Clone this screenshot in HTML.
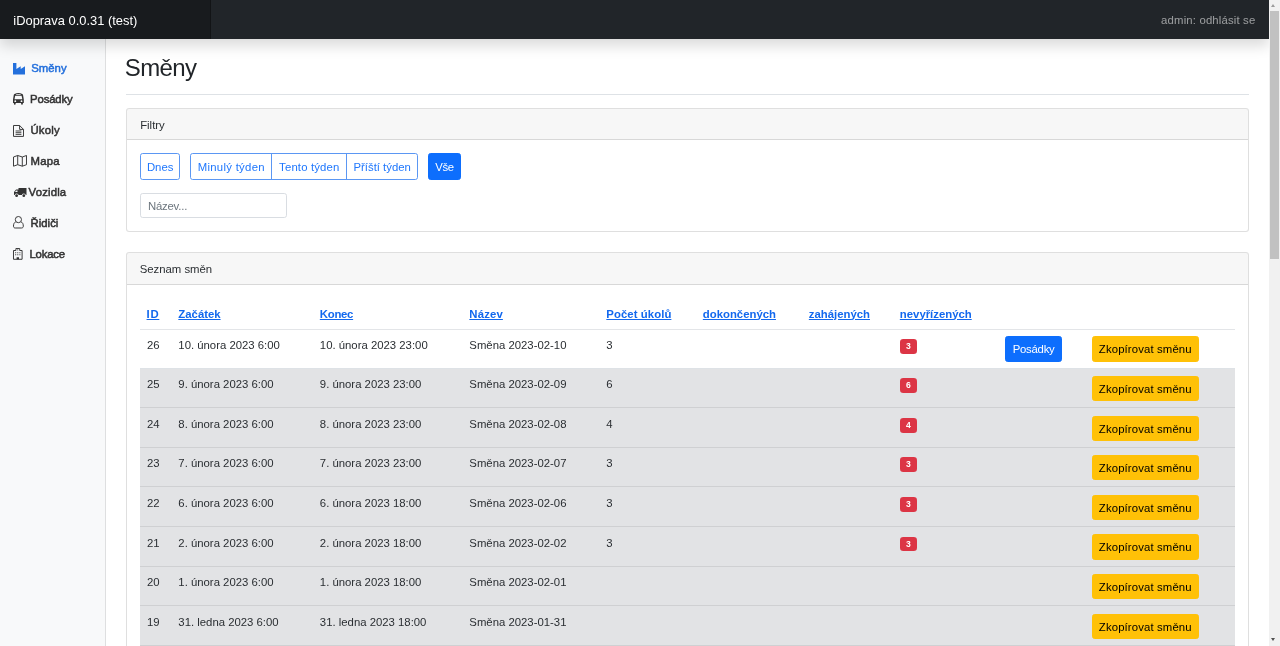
<!DOCTYPE html>
<html lang="cs">
<head>
<meta charset="utf-8">
<title>iDoprava</title>
<style>
*{box-sizing:border-box}
html,body{margin:0;padding:0}
body{width:1280px;height:646px;overflow:hidden;position:relative;background:#fff;color:#2a2e32;
  font-family:"Liberation Sans",sans-serif;font-size:11.35px;line-height:17.5px}
a{color:#0d6efd}
#page{position:absolute;left:0;top:0;width:1268.5px;height:646px;overflow:hidden;will-change:transform}
/* header */
header{position:absolute;left:0;top:0;width:1268.5px;height:38.8px;background:#212529;z-index:10;
  box-shadow:0 6.67px 13.33px rgba(0,0,0,.15)}
.brand{position:absolute;left:0;top:0;width:211.3px;height:38.8px;background:rgba(0,0,0,.25);
  box-shadow:inset -1px 0 0 rgba(0,0,0,.25);color:#fff;font-size:12.9px;line-height:20px;padding:10.6px 13.3px 0 13.3px;
  text-decoration:none;white-space:nowrap}
.logout{position:absolute;right:13.1px;top:0.6px;height:38.8px;line-height:38.8px;color:rgba(255,255,255,.55);
  text-decoration:none;white-space:nowrap;letter-spacing:.16px}
/* sidebar */
#sidebar{position:absolute;left:0;top:0;width:105.8px;height:646px;background:#f8f9fa;
  box-shadow:inset -1px 0 0 rgba(0,0,0,.1);z-index:5}
#sidebar ul{list-style:none;margin:0;padding:0}
#sidebar li{position:absolute;left:0;width:105px;height:30.87px}
#sidebar a{display:block;color:#333;font-weight:normal;-webkit-text-stroke:.5px currentColor;text-decoration:none;white-space:nowrap}
#sidebar a.active{color:#2470dc}
#sidebar svg{position:absolute;fill:currentColor;overflow:visible}
#sidebar span{position:absolute;top:0;line-height:17.5px}
/* main */
main{position:absolute;left:105.8px;top:38.8px;width:1162.7px;padding:0 19.5px 0 20.2px}
.titlebar{height:56.1px;border-bottom:1px solid #dee2e6;margin-bottom:13.3px;position:relative}
h1{position:absolute;left:-1.2px;top:13.3px;margin:0;letter-spacing:-0.65px;font-size:24px;line-height:32px;font-weight:normal;color:#212529}
.card{border:1px solid rgba(0,0,0,.125);border-radius:3.33px;background:#fff}
.card-header{height:30.9px;padding:7.8px 13.2px 0 13.2px;background:rgba(0,0,0,.03);border-bottom:1px solid rgba(0,0,0,.125);
  border-radius:2.5px 2.5px 0 0}
.card-body{padding:13.3px}
.btn{display:inline-block;vertical-align:middle;font-size:11.35px;line-height:17.5px;padding:3.3px 6.67px;border:1px solid transparent;
  border-radius:2.67px;text-decoration:none;white-space:nowrap;text-align:center}
.btn-outline-primary{color:#1f77fd;border-color:#5b97f3}
.btn-primary{color:#fff;background:#0d6efd;border-color:#0d6efd}
.btn-warning{color:#000;background:#ffc107;border-color:#ffc107}
.filters{height:26.6px;margin-bottom:13.4px;position:relative}
.filters .btn{position:absolute;top:0;height:26.6px;padding:4.7px 0 0 0}
.form-control{display:block;width:146.6px;height:25px;border:1px solid #d9dde2;border-radius:2.67px;letter-spacing:-.2px;
  padding:3.3px 6.67px;font-family:inherit;font-size:11.35px;line-height:17.5px;color:#212529;background:#fff;outline:0}
.form-control::placeholder{color:#6c757d;opacity:1}
#c1{height:124px;margin-bottom:20px}
#c2{height:500px}
#c2 .card-header{height:31.8px;padding-top:8.1px;padding-left:12.7px}
table{border-collapse:separate;border-spacing:0;table-layout:fixed;width:1094.6px;margin:0}
th,td{padding:7.57px 6.67px 0 6.67px;text-align:left;vertical-align:top;border-bottom:1px solid #dee2e6;white-space:nowrap;overflow:hidden}
th{font-weight:bold;vertical-align:bottom;height:31.7px;padding:0 6.67px 5.98px 6.67px;border-bottom-color:#e3e5e8}
th a{color:#1268ee;text-decoration:underline}
tbody td{height:39.6px}
tbody tr.first td{height:38.65px;padding-top:6.97px}
tr.sec td{background:#e2e3e5;border-bottom-color:#cfd0d2}
td .btn{display:block;float:left;height:25.2px;padding:3.92px 6.67px 0 6.67px;margin-top:-0.07px}
tr.first td .btn{margin-top:-0.65px;height:25.5px}
td .btn-warning{width:106.9px;padding-left:0;padding-right:0;letter-spacing:.13px}
.badge{display:inline-block;background:#dc3545;color:#fff;font-weight:bold;font-size:8.6px;line-height:8.75px;
  padding:3.06px 6.15px;border-radius:3.33px;vertical-align:baseline}
/* scrollbar */
#sb{position:absolute;left:1268.7px;top:0;width:11.3px;height:646px;background:#f1f1f1}
#sb .thumb{position:absolute;left:1.4px;width:8.8px;top:10.9px;height:247.9px;background:#c1c1c1}
#sb .up,#sb .dn{position:absolute;left:2.8px;width:0;height:0;border-left:2.9px solid transparent;border-right:2.9px solid transparent}
#sb .up{top:3.9px;border-bottom:3.4px solid #9c9c9c}
#sb .dn{top:638.1px;border-top:3.5px solid #505050}
</style>
</head>
<body>
<div id="page">
<header>
  <a class="brand">iDoprava 0.0.31 (test)</a>
  <a class="logout">admin: odhlásit se</a>
</header>
<nav id="sidebar">
  <ul>
    <li style="top:0"><a class="active"><svg style="left:13.4px;top:62.9px;width:12px;height:11.4px" viewBox="0 0 12 11.4"><path d="M0 0H3.4V6L7.7 3.2V6L12 3.2V11.4H0Z"/></svg><span style="left:31.3px;top:60.00px;letter-spacing:0px">Směny</span></a></li>
    <li style="top:0"><a><svg style="left:13.2px;top:93.3px;width:10.8px;height:11.8px" viewBox="0 0 10.8 11.8"><path fill-rule="evenodd" d="M1.5 0.9Q5.4 -0.9 9.3 0.9Q10 1.3 10.1 2.2L10.8 6.4V9.9H9.9V10.8Q9.9 11.8 9 11.8Q8.1 11.8 8.1 10.8V9.9H2.7V10.8Q2.7 11.8 1.8 11.8Q0.9 11.8 0.9 10.8V9.9H0V6.4L0.7 2.2Q0.8 1.3 1.5 0.9ZM3.2 1.05H7.6V1.75H3.2Z M2.2 2.7H8.6L9.3 6.2H1.5Z M2.3 7.2A0.95 0.95 0 1 0 2.3 9.1A0.95 0.95 0 1 0 2.3 7.2Z M8.5 7.2A0.95 0.95 0 1 0 8.5 9.1A0.95 0.95 0 1 0 8.5 7.2Z"/></svg><span style="left:30.1px;top:90.87px;letter-spacing:-0.15px">Posádky</span></a></li>
    <li style="top:0"><a><svg style="left:13px;top:124.6px;width:11px;height:11.9px" viewBox="0 0 11 11.9"><path fill="none" stroke="currentColor" stroke-width=".95" stroke-linejoin="round" d="M.5 .5H6.6L10.5 4.4V11.4H.5Z M6.6 .5V4.4H10.5"/><path fill="none" stroke="currentColor" stroke-width=".9" d="M2.6 6H8.4M2.6 7.7H8.4M2.6 9.4H8.4"/></svg><span style="left:30.5px;top:122.44px;letter-spacing:0.18px">Úkoly</span></a></li>
    <li style="top:0"><a><svg style="left:12.9px;top:155.2px;width:14px;height:11.7px" viewBox="0 0 14 11.7"><path fill="none" stroke="currentColor" stroke-width=".95" stroke-linejoin="round" d="M.5 2L4.7 .5L9.3 2L13.5 .5V9.7L9.3 11.2L4.7 9.7L.5 11.2Z M4.7 .5V9.7 M9.3 2V11.2"/></svg><span style="left:30.5px;top:153.31px;letter-spacing:0.23px">Mapa</span></a></li>
    <li style="top:0"><a><svg style="left:13.9px;top:187.6px;width:12.5px;height:9.3px" viewBox="0 0 12.5 9.3"><path fill-rule="evenodd" d="M4.5 0H12.5V7H0V3.9L2.1 1.6H4.5Z M0.9 4.1H3.5V2.5H2.4Z"/><circle cx="2.6" cy="7.6" r="2.05" fill="#f8f9fa"/><circle cx="9.8" cy="7.6" r="2.05" fill="#f8f9fa"/><circle cx="2.6" cy="7.7" r="1.4"/><circle cx="9.8" cy="7.7" r="1.4"/></svg><span style="left:28.6px;top:184.18px;letter-spacing:0.16px">Vozidla</span></a></li>
    <li style="top:0"><a><svg style="left:13.2px;top:216.2px;width:10.8px;height:12.5px" viewBox="0 0 10.8 12.5"><circle cx="5.4" cy="3.6" r="3.1" fill="none" stroke="currentColor" stroke-width=".95"/><path fill="none" stroke="currentColor" stroke-width=".95" d="M2.7 6C1 6.5 .5 8.2 .5 10.2C.5 11.4 1.2 12 2.2 12H8.6C9.6 12 10.3 11.4 10.3 10.2C10.3 8.2 9.8 6.5 8.1 6"/></svg><span style="left:30.6px;top:215.05px;letter-spacing:0px">Řidiči</span></a></li>
    <li style="top:0"><a><svg style="left:13.4px;top:248px;width:9.6px;height:11.8px" viewBox="0 0 9.6 11.8"><path fill="none" stroke="currentColor" stroke-width=".95" stroke-linejoin="round" d="M.5 2.5H2.9V.5H6.7V2.5H9.1V11.3H.5Z"/><path d="M3.6 11.3V9.2H6V11.3Z M2.2 4.2H3.2V5.2H2.2Z M4.3 4.2H5.3V5.2H4.3Z M6.4 4.2H7.4V5.2H6.4Z M2.2 6.3H3.2V7.3H2.2Z M4.3 6.3H5.3V7.3H4.3Z M6.4 6.3H7.4V7.3H6.4Z M4.4 1.3H5.2V2.4H4.4Z"/></svg><span style="left:29.5px;top:245.92px;letter-spacing:-0.2px">Lokace</span></a></li>
  </ul>
</nav>
<main>
  <div class="titlebar"><h1>Směny</h1></div>
  <div class="card" id="c1">
    <div class="card-header">Filtry</div>
    <div class="card-body">
      <div class="filters">
        <a class="btn btn-outline-primary" style="left:0;width:39.7px">Dnes</a>
        <a class="btn btn-outline-primary" style="left:50px;width:82px;border-radius:2.67px 0 0 2.67px;letter-spacing:.29px">Minulý týden</a>
        <a class="btn btn-outline-primary" style="left:131.2px;width:75.6px;border-radius:0;letter-spacing:.15px">Tento týden</a>
        <a class="btn btn-outline-primary" style="left:206px;width:71.8px;border-radius:0 2.67px 2.67px 0">Příští týden</a>
        <a class="btn btn-primary" style="left:288px;width:32.5px;letter-spacing:-.3px">Vše</a>
      </div>
      <input class="form-control" type="text" placeholder="Název...">
    </div>
  </div>
  <div class="card" id="c2">
    <div class="card-header">Seznam směn</div>
    <div class="card-body">
      <table>
        <colgroup><col style="width:31.4px"><col style="width:141.5px"><col style="width:149.5px"><col style="width:137px"><col style="width:96.5px"><col style="width:106px"><col style="width:91px"><col style="width:105px"><col style="width:87px"><col></colgroup>
        <thead><tr><th><a style="letter-spacing:.7px;margin-left:-.4px">ID</a></th><th><a>Začátek</a></th><th><a style="letter-spacing:-.28px">Konec</a></th><th><a style="letter-spacing:.15px">Název</a></th><th><a style="letter-spacing:.07px">Počet úkolů</a></th><th><a>dokončených</a></th><th><a>zahájených</a></th><th><a>nevyřízených</a></th><th></th><th></th></tr></thead>
        <tbody>
          <tr class="first"><td>26</td><td>10. února 2023 6:00</td><td>10. února 2023 23:00</td><td>Směna 2023-02-10</td><td>3</td><td></td><td></td><td><span class="badge">3</span></td><td><a class="btn btn-primary" style="margin-left:.5px;width:56.6px;padding-left:0;padding-right:0;letter-spacing:-.25px">Posádky</a></td><td><a class="btn btn-warning">Zkopírovat směnu</a></td></tr>
          <tr class="sec"><td>25</td><td>9. února 2023 6:00</td><td>9. února 2023 23:00</td><td>Směna 2023-02-09</td><td>6</td><td></td><td></td><td><span class="badge">6</span></td><td></td><td><a class="btn btn-warning">Zkopírovat směnu</a></td></tr>
          <tr class="sec"><td>24</td><td>8. února 2023 6:00</td><td>8. února 2023 23:00</td><td>Směna 2023-02-08</td><td>4</td><td></td><td></td><td><span class="badge">4</span></td><td></td><td><a class="btn btn-warning">Zkopírovat směnu</a></td></tr>
          <tr class="sec"><td>23</td><td>7. února 2023 6:00</td><td>7. února 2023 23:00</td><td>Směna 2023-02-07</td><td>3</td><td></td><td></td><td><span class="badge">3</span></td><td></td><td><a class="btn btn-warning">Zkopírovat směnu</a></td></tr>
          <tr class="sec"><td>22</td><td>6. února 2023 6:00</td><td>6. února 2023 18:00</td><td>Směna 2023-02-06</td><td>3</td><td></td><td></td><td><span class="badge">3</span></td><td></td><td><a class="btn btn-warning">Zkopírovat směnu</a></td></tr>
          <tr class="sec"><td>21</td><td>2. února 2023 6:00</td><td>2. února 2023 18:00</td><td>Směna 2023-02-02</td><td>3</td><td></td><td></td><td><span class="badge">3</span></td><td></td><td><a class="btn btn-warning">Zkopírovat směnu</a></td></tr>
          <tr class="sec"><td>20</td><td>1. února 2023 6:00</td><td>1. února 2023 18:00</td><td>Směna 2023-02-01</td><td></td><td></td><td></td><td></td><td></td><td><a class="btn btn-warning">Zkopírovat směnu</a></td></tr>
          <tr class="sec"><td>19</td><td>31. ledna 2023 6:00</td><td>31. ledna 2023 18:00</td><td>Směna 2023-01-31</td><td></td><td></td><td></td><td></td><td></td><td><a class="btn btn-warning">Zkopírovat směnu</a></td></tr>
          <tr class="sec"><td>18</td><td>30. ledna 2023 6:00</td><td>30. ledna 2023 18:00</td><td>Směna 2023-01-30</td><td></td><td></td><td></td><td></td><td></td><td><a class="btn btn-warning">Zkopírovat směnu</a></td></tr>
        </tbody>
      </table>
    </div>
  </div>
</main>
</div>
<div id="sb"><div class="up"></div><div class="thumb"></div><div class="dn"></div></div>
</body>
</html>
